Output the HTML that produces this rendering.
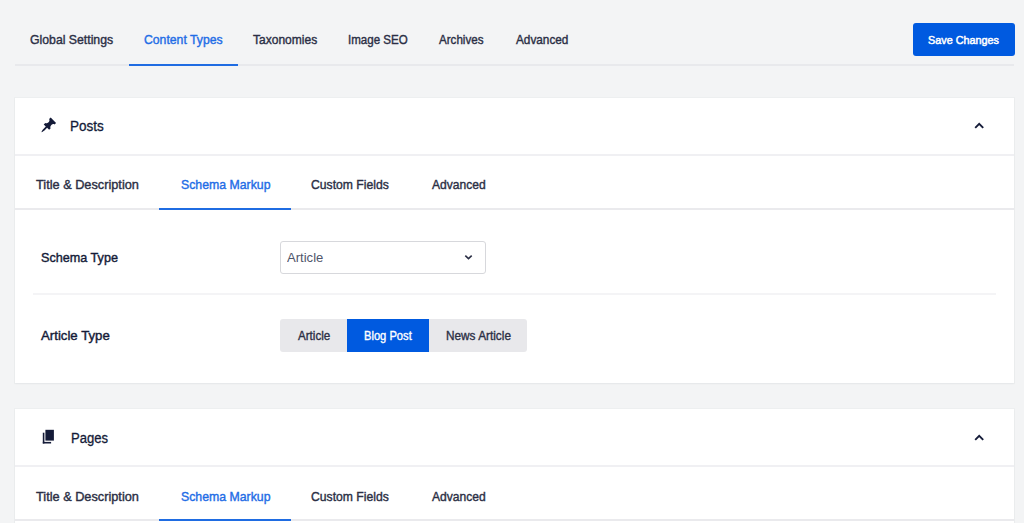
<!DOCTYPE html>
<html>
<head>
<meta charset="utf-8">
<style>
html,body{margin:0;padding:0;}
body{width:1024px;height:523px;overflow:hidden;background:#f3f4f5;position:relative;font-family:"Liberation Sans",sans-serif;color:#141b38;}
.a{position:absolute;white-space:nowrap;line-height:1;}
.ln{position:absolute;height:1px;}
.card{position:absolute;left:15px;width:999px;background:#fff;box-shadow:0 0 0 1px rgba(20,27,56,0.025),0 1px 2px rgba(20,27,56,0.04);}
</style>
</head>
<body>
<!-- top nav -->
<div class="ln" style="left:15px;top:64px;width:999px;height:2px;background:#e8e9ec;"></div>
<div class="ln" style="left:129px;top:64px;width:109px;height:2px;background:#1f6ce2;"></div>
<div style="position:absolute;left:913px;top:23px;width:102px;height:33px;background:#005ae0;border-radius:3px;"></div>

<!-- card 1 -->
<div class="card" style="top:98px;height:285px;">
  <div class="ln" style="left:0;top:56px;width:999px;height:2px;background:#f0f0f3;"></div>
  <div class="ln" style="left:0;top:110px;width:999px;height:2px;background:#eaeaed;"></div>
  <div class="ln" style="left:144px;top:110px;width:132px;height:2px;background:#1f6ce2;"></div>
  <div style="position:absolute;left:265px;top:143px;width:204px;height:31px;border:1px solid #d7d8dc;border-radius:3px;background:#fff;"></div>
  <div class="ln" style="left:18px;top:195px;width:963px;height:2px;background:#f4f4f6;"></div>
  <div style="position:absolute;top:221px;height:33px;left:265px;width:67px;border-radius:3px 0 0 3px;background:#e8e8eb;"></div>
  <div style="position:absolute;top:221px;height:33px;left:332px;width:82px;background:#005ae0;"></div>
  <div style="position:absolute;top:221px;height:33px;left:414px;width:98px;border-radius:0 3px 3px 0;background:#e8e8eb;"></div>
</div>

<!-- card 2 -->
<div class="card" style="top:409px;height:200px;">
  <div class="ln" style="left:0;top:56px;width:999px;height:2px;background:#f0f0f3;"></div>
  <div class="ln" style="left:0;top:110px;width:999px;height:2px;background:#eaeaed;"></div>
  <div class="ln" style="left:144px;top:110px;width:132px;height:2px;background:#1f6ce2;"></div>
</div>

<!-- icons -->
<svg style="position:absolute;left:0;top:0;overflow:visible" width="1" height="1">
  <g transform="translate(40.25,116.5) scale(0.85)" fill="#141b38">
    <path d="M10.44 3.02l1.82-1.82 6.36 6.35-1.83 1.82c-1.05-.68-2.48-.57-3.41.36l-.75.75c-.92.93-1.04 2.350-.35 3.41l-1.83 1.82-2.41-2.41-2.8 2.79c-.42.42-3.38 2.71-3.8 2.29s1.86-3.39 2.28-3.81l2.79-2.79L4.1 9.36l1.83-1.82c1.05.69 2.48.57 3.4-.36l.75-.75c.93-.92 1.05-2.35.36-3.41z"/>
  </g>
  <g fill="#141b38">
    <rect x="45.4" y="429.8" width="8.5" height="10.8"/>
    <rect x="42.8" y="432.7" width="1.6" height="10.8"/>
    <rect x="42.8" y="441.9" width="8.3" height="1.6"/>
  </g>
  <path d="M975.2 127.8 L979.2 123.8 L983.2 127.8" fill="none" stroke="#141b38" stroke-width="1.9"/>
  <path d="M975.2 439.8 L979.2 435.8 L983.2 439.8" fill="none" stroke="#141b38" stroke-width="1.9"/>
  <path d="M465.3 255.6 L468.5 258.6 L471.7 255.6" fill="none" stroke="#2b2f45" stroke-width="1.6"/>
</svg>

<div class="a" id="gs" style="left:29.80px;top:32.70px;font-size:13px;color:#2b2f45;letter-spacing:0.000px;transform:scaleX(0.9429);transform-origin:0 0;-webkit-text-stroke:0.4px #2b2f45;">Global Settings</div>
<div class="a" id="ct" style="left:143.70px;top:33.00px;font-size:13px;color:#1f6de6;letter-spacing:0.000px;transform:scaleX(0.9402);transform-origin:0 0;-webkit-text-stroke:0.4px #1f6de6;">Content Types</div>
<div class="a" id="tax" style="left:253.30px;top:32.80px;font-size:13px;color:#2b2f45;letter-spacing:0.000px;transform:scaleX(0.9257);transform-origin:0 0;-webkit-text-stroke:0.4px #2b2f45;">Taxonomies</div>
<div class="a" id="iseo" style="left:348.20px;top:32.80px;font-size:13px;color:#2b2f45;letter-spacing:0.000px;transform:scaleX(0.8890);transform-origin:0 0;-webkit-text-stroke:0.4px #2b2f45;">Image SEO</div>
<div class="a" id="arch" style="left:439.10px;top:32.80px;font-size:13px;color:#2b2f45;letter-spacing:0.000px;transform:scaleX(0.8928);transform-origin:0 0;-webkit-text-stroke:0.4px #2b2f45;">Archives</div>
<div class="a" id="adv" style="left:515.60px;top:32.80px;font-size:13px;color:#2b2f45;letter-spacing:0.000px;transform:scaleX(0.9058);transform-origin:0 0;-webkit-text-stroke:0.4px #2b2f45;">Advanced</div>
<div class="a" id="save" style="left:928.00px;top:34.99px;font-size:11px;color:#ffffff;letter-spacing:0.000px;transform:scaleX(0.9829);transform-origin:0 0;-webkit-text-stroke:0.5px #ffffff;">Save Changes</div>
<div class="a" id="posts" style="left:70.40px;top:118.95px;font-size:14px;color:#141b38;letter-spacing:0.000px;transform:scaleX(0.9647);transform-origin:0 0;-webkit-text-stroke:0.3px #141b38;">Posts</div>
<div class="a" id="td1" style="left:36.20px;top:177.75px;font-size:13px;color:#2b2f45;letter-spacing:0.000px;transform:scaleX(0.9798);transform-origin:0 0;-webkit-text-stroke:0.4px #2b2f45;">Title &amp; Description</div>
<div class="a" id="sm1" style="left:180.60px;top:177.75px;font-size:13px;color:#1f6de6;letter-spacing:0.000px;transform:scaleX(0.9452);transform-origin:0 0;-webkit-text-stroke:0.4px #1f6de6;">Schema Markup</div>
<div class="a" id="cf1" style="left:311.20px;top:177.75px;font-size:13px;color:#2b2f45;letter-spacing:0.000px;transform:scaleX(0.9357);transform-origin:0 0;-webkit-text-stroke:0.4px #2b2f45;">Custom Fields</div>
<div class="a" id="ad1" style="left:431.80px;top:177.75px;font-size:13px;color:#2b2f45;letter-spacing:0.000px;transform:scaleX(0.9290);transform-origin:0 0;-webkit-text-stroke:0.4px #2b2f45;">Advanced</div>
<div class="a" id="st" style="left:40.50px;top:250.70px;font-size:13px;color:#141b38;letter-spacing:0.000px;transform:scaleX(0.9709);transform-origin:0 0;-webkit-text-stroke:0.4px #141b38;">Schema Type</div>
<div class="a" id="selart" style="left:287.10px;top:250.67px;font-size:13.5px;color:#50566b;letter-spacing:0.000px;transform:scaleX(0.9677);transform-origin:0 0;">Article</div>
<div class="a" id="at" style="left:41.20px;top:328.70px;font-size:13px;color:#141b38;letter-spacing:0.000px;transform:scaleX(1.0162);transform-origin:0 0;-webkit-text-stroke:0.4px #141b38;">Article Type</div>
<div class="a" id="b1" style="left:297.60px;top:330.14px;font-size:12px;color:#2b2f45;letter-spacing:0.000px;transform:scaleX(0.9687);transform-origin:0 0;-webkit-text-stroke:0.35px #2b2f45;">Article</div>
<div class="a" id="b2" style="left:364.20px;top:330.14px;font-size:12px;color:#ffffff;letter-spacing:0.000px;transform:scaleX(0.9293);transform-origin:0 0;-webkit-text-stroke:0.35px #ffffff;">Blog Post</div>
<div class="a" id="b3" style="left:445.80px;top:330.14px;font-size:12px;color:#2b2f45;letter-spacing:0.000px;transform:scaleX(0.9837);transform-origin:0 0;-webkit-text-stroke:0.35px #2b2f45;">News Article</div>
<div class="a" id="pages" style="left:70.60px;top:430.75px;font-size:14px;color:#141b38;letter-spacing:0.000px;transform:scaleX(0.9334);transform-origin:0 0;-webkit-text-stroke:0.3px #141b38;">Pages</div>
<div class="a" id="td2" style="left:36.20px;top:489.50px;font-size:13px;color:#2b2f45;letter-spacing:0.000px;transform:scaleX(0.9798);transform-origin:0 0;-webkit-text-stroke:0.4px #2b2f45;">Title &amp; Description</div>
<div class="a" id="sm2" style="left:180.60px;top:489.50px;font-size:13px;color:#1f6de6;letter-spacing:0.000px;transform:scaleX(0.9452);transform-origin:0 0;-webkit-text-stroke:0.4px #1f6de6;">Schema Markup</div>
<div class="a" id="cf2" style="left:311.20px;top:489.50px;font-size:13px;color:#2b2f45;letter-spacing:0.000px;transform:scaleX(0.9357);transform-origin:0 0;-webkit-text-stroke:0.4px #2b2f45;">Custom Fields</div>
<div class="a" id="ad2" style="left:431.80px;top:489.50px;font-size:13px;color:#2b2f45;letter-spacing:0.000px;transform:scaleX(0.9290);transform-origin:0 0;-webkit-text-stroke:0.4px #2b2f45;">Advanced</div>
</body>
</html>
